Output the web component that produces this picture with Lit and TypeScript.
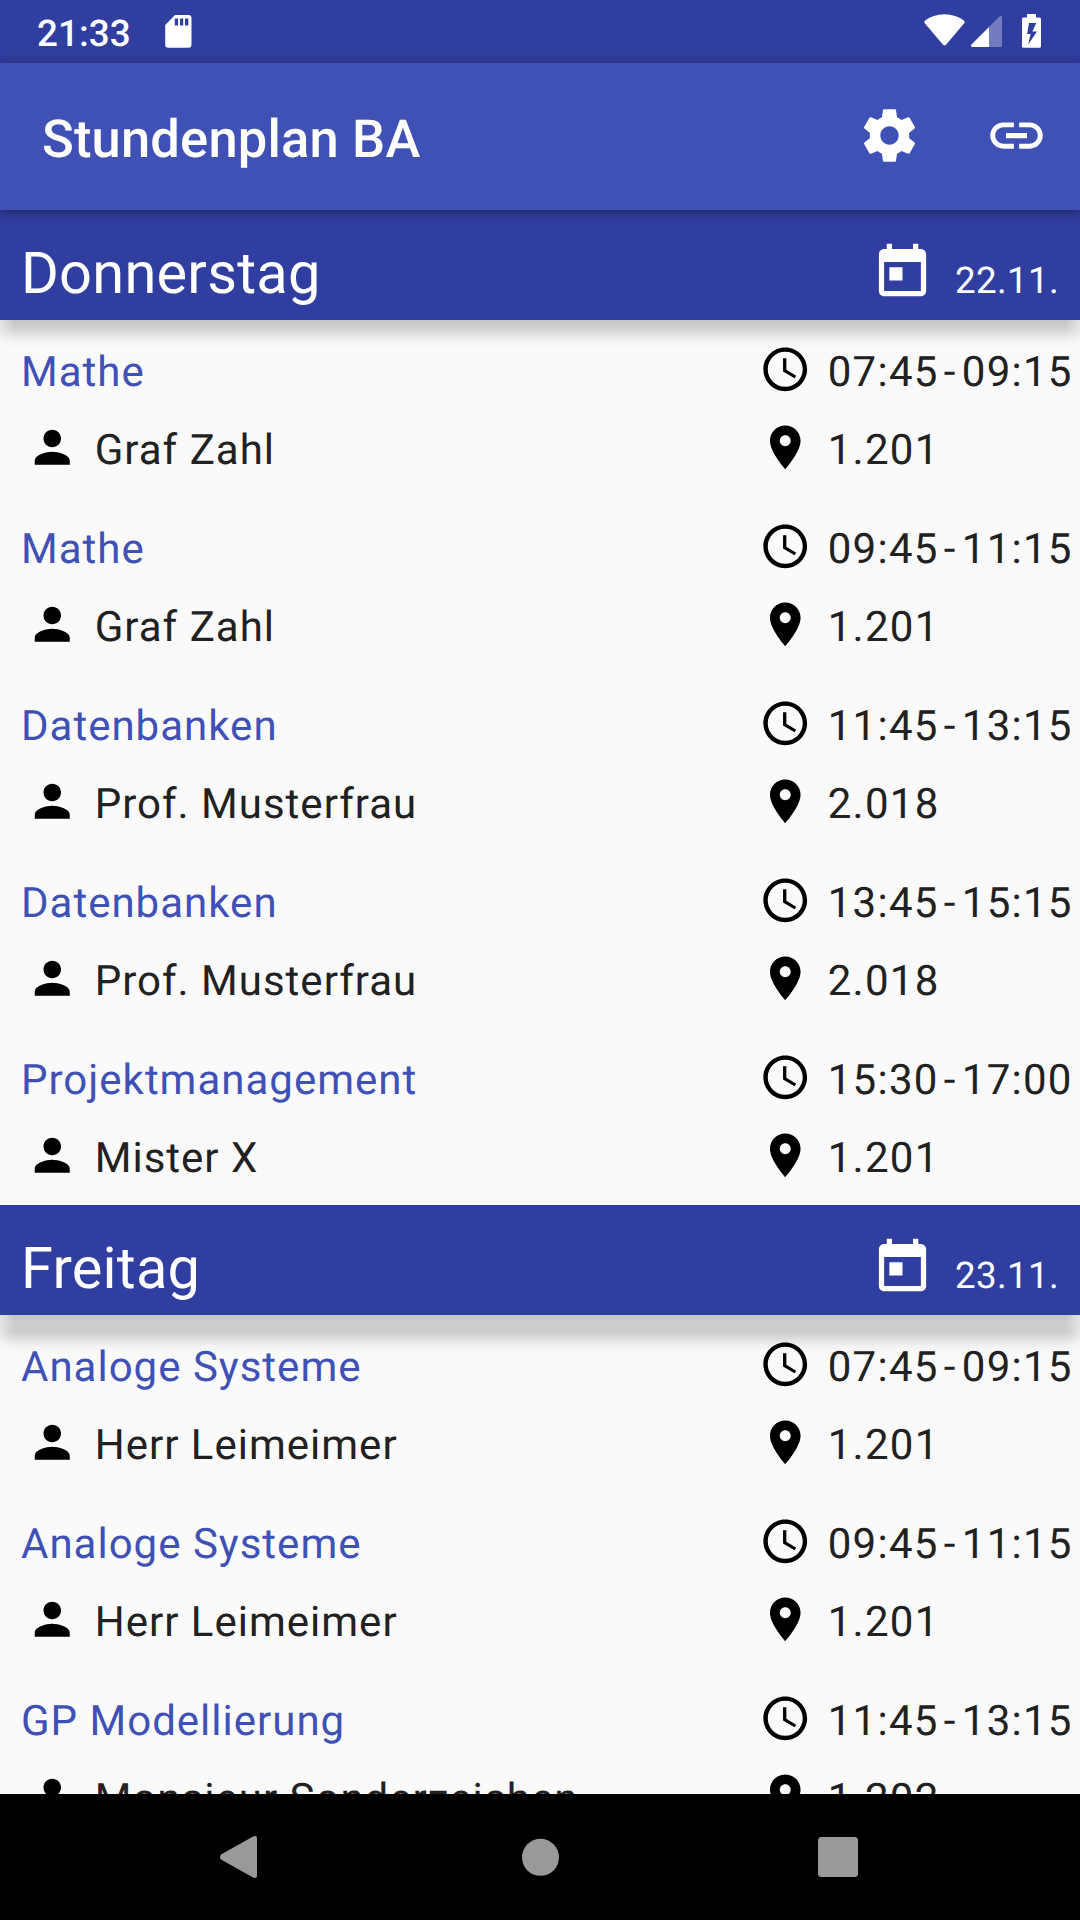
import { LitElement, html, css, svg } from "lit";
import { customElement, property } from "lit/decorators.js";

interface Lesson {
  subject: string;
  teacher: string;
  start: string;
  end: string;
  room: string;
}

interface Day {
  name: string;
  date: string;
  deep: boolean;
  lessons: Lesson[];
}

const lesson = (subject: string, teacher: string, start: string, end: string, room: string): Lesson => ({
  subject,
  teacher,
  start,
  end,
  room,
});

const DAYS: Day[] = [
  {
    name: "Donnerstag",
    date: "22.11.",
    deep: false,
    lessons: [
      lesson("Mathe", "Graf Zahl", "07:45", "09:15", "1.201"),
      lesson("Mathe", "Graf Zahl", "09:45", "11:15", "1.201"),
      lesson("Datenbanken", "Prof. Musterfrau", "11:45", "13:15", "2.018"),
      lesson("Datenbanken", "Prof. Musterfrau", "13:45", "15:15", "2.018"),
      lesson("Projektmanagement", "Mister X", "15:30", "17:00", "1.201"),
    ],
  },
  {
    name: "Freitag",
    date: "23.11.",
    deep: true,
    lessons: [
      lesson("Analoge Systeme", "Herr Leimeimer", "07:45", "09:15", "1.201"),
      lesson("Analoge Systeme", "Herr Leimeimer", "09:45", "11:15", "1.201"),
      lesson("GP Modellierung", "Monsieur Sonderzeichen", "11:45", "13:15", "1.202"),
    ],
  },
];

const ICONS: Record<string, string> = {
  settings:
    "M19.43 12.98c.04-.32.07-.64.07-.98s-.03-.66-.07-.98l2.11-1.65c.19-.15.24-.42.12-.64l-2-3.46c-.12-.22-.39-.3-.61-.22l-2.49 1c-.52-.4-1.08-.73-1.69-.98l-.38-2.65C14.46 2.18 14.25 2 14 2h-4c-.25 0-.46.18-.49.42l-.38 2.65c-.61.25-1.17.59-1.69.98l-2.49-1c-.23-.09-.49 0-.61.22l-2 3.46c-.13.22-.07.49.12.64l2.11 1.65c-.04.32-.07.65-.07.98s.03.66.07.98l-2.11 1.65c-.19.15-.24.42-.12.64l2 3.46c.12.22.39.3.61.22l2.49-1c.52.4 1.08.73 1.69.98l.38 2.65c.03.24.24.42.49.42h4c.25 0 .46-.18.49-.42l.38-2.65c.61-.25 1.17-.59 1.69-.98l2.49 1c.23.09.49 0 .61-.22l2-3.46c.12-.22.07-.49-.12-.64l-2.11-1.65zM12 15.5c-1.93 0-3.5-1.57-3.5-3.5s1.57-3.5 3.5-3.5 3.5 1.57 3.5 3.5-1.57 3.5-3.5 3.5z",
  link: "M3.9 12c0-1.71 1.39-3.1 3.1-3.1h4V7H7c-2.76 0-5 2.24-5 5s2.24 5 5 5h4v-1.9H7c-1.71 0-3.1-1.39-3.1-3.1zM8 13h8v-2H8v2zm9-6h-4v1.9h4c1.71 0 3.1 1.39 3.1 3.1s-1.39 3.1-3.1 3.1h-4V17h4c2.76 0 5-2.24 5-5s-2.24-5-5-5z",
  today:
    "M19 3h-1V1h-2v2H8V1H6v2H5c-1.11 0-1.99.9-1.99 2L3 19c0 1.1.89 2 2 2h14c1.1 0 2-.9 2-2V5c0-1.1-.9-2-2-2zm0 16H5V8h14v11zM7 10h5v5H7z",
  person:
    "M12 12c2.21 0 4-1.79 4-4s-1.79-4-4-4-4 1.79-4 4 1.79 4 4 4zm0 2c-2.67 0-8 1.34-8 4v2h16v-2c0-2.66-5.33-4-8-4z",
  schedule:
    "M11.99 2C6.47 2 2 6.48 2 12s4.47 10 9.99 10C17.52 22 22 17.52 22 12S17.52 2 11.99 2zM12 20c-4.42 0-8-3.58-8-8s3.58-8 8-8 8 3.58 8 8-3.58 8-8 8zm.5-13H11v6l5.25 3.15.75-1.23-4.5-2.67z",
  place:
    "M12 2C8.13 2 5 5.13 5 9c0 5.25 7 13 7 13s7-7.75 7-13c0-3.87-3.13-7-7-7zm0 9.5c-1.38 0-2.5-1.12-2.5-2.5s1.12-2.5 2.5-2.5 2.5 1.12 2.5 2.5-1.12 2.5-2.5 2.5z",
};

const icon = (name: string, cls: string) =>
  html`<svg class=${cls} viewBox="0 0 24 24">${svg`<path fill="currentColor" d=${ICONS[name]}></path>`}</svg>`;

@customElement("status-bar")
class StatusBar extends LitElement {
  static styles = css`
    :host {
      display: flex;
      height: 63px;
      background: #303e9f;
      color: #fff;
    }
    .clock {
      padding-left: 37px;
      width: 164px;
      box-sizing: border-box;
      font-size: 36.75px;
      font-weight: 500;
      line-height: 67px;
      letter-spacing: 0.100px;
    }
    .sd {
      width: 28px;
      height: 34px;
      margin: 14px auto 0 0;
    }
    .system {
      width: 120px;
      height: 36px;
      margin: 13px 37px 0 0;
    }
  `;
  render() {
    return html`
      <span class="clock">21:33</span>
      <svg class="sd" viewBox="0 0 28 34">
        <path
          fill="#fff"
          fill-rule="evenodd"
          d="M11 1h13.5a3 3 0 0 1 3 3v26.700a3 3 0 0 1-3 3h-20.300a3 3 0 0 1-3-3V11zM10.800 4.500v7h3.300v-7zM16 4.500v7h3.200v-7zM21 4.500v7h3.300v-7z"
        ></path>
      </svg>
      <svg class="system" viewBox="0 0 120 36">
        <path fill="#fff" d="M1.800 7.800Q10 1.300 21.500 1.300T41.200 7.800Q42.200 9 41.200 10.300L23 31.800Q21.500 33.300 20 31.800L1.800 10.300Q.8 9 1.800 7.800z"></path>
        <path fill="#fff" fill-opacity=".32" d="M66 14L76.400 3.600Q78.200 2.200 79 4V32.500Q79 34 77.500 34H66z"></path>
        <path fill="#fff" d="M66 14V34H49.200Q47.200 33.500 48.500 31.500z"></path>
        <path
          fill="#fff"
          fill-rule="evenodd"
          d="M104 1h9v3.500h3.500q1.500 0 1.500 1.500v27.200q0 1.500-1.500 1.500h-16q-1.500 0-1.500-1.500V6q0-1.500 1.500-1.500H104zM106 10l-1.800 11h3.300l-2.200 10.500L114 18.500h-4.600L113.300 10z"
        ></path>
      </svg>
    `;
  }
}

@customElement("app-bar")
class AppBar extends LitElement {
  static styles = css`
    :host {
      display: flex;
      align-items: center;
      height: 147px;
      padding: 0 1px 0 42px;
      background: #3f51b5;
      color: #fff;
      box-sizing: border-box;
      position: relative;
      z-index: 2;
      box-shadow: 0 2px 12px rgba(0, 0, 0, 0.4);
    }
    .title {
      flex: 1;
      margin: 4px 0 0;
      font-size: 52.5px;
      font-weight: 500;
      line-height: 62px;
      letter-spacing: 0.170px;
    }
    .action {
      width: 63px;
      height: 63px;
      margin: 0 31.500px 2px;
    }
    .action:first-of-type {
      margin-right: 32.500px;
    }
  `;
  render() {
    return html`
      <h1 class="title">Stundenplan BA</h1>
      ${icon("settings", "action")} ${icon("link", "action")}
    `;
  }
}

@customElement("day-section")
class DaySection extends LitElement {
  @property({ attribute: false }) day!: Day;

  static styles = css`
    :host {
      display: block;
    }
    .head {
      display: flex;
      align-items: baseline;
      height: 110px;
      padding: 0 21px 0 21px;
      box-sizing: border-box;
      background: #303e9f;
      color: #fff;
    }
    .name {
      flex: 1;
      margin: 0;
      font-size: 57.75px;
      font-weight: 400;
      line-height: 128px;
      letter-spacing: 0.220px;
    }
    .today {
      width: 63px;
      height: 63px;
      align-self: flex-start;
      margin: 31px 21px 0 0;
    }
    .date {
      width: 104px;
      font-size: 36.75px;
      letter-spacing: 0.350px;
      white-space: nowrap;
    }
    .shade {
      height: 32px;
      margin: 0 0 -32px;
      background: linear-gradient(#c5c5c5, #cbcbcb 18%, #dedede 42%, #f1f1f1 64%, #f8f8f8 82%, #fafafa);
      mask-image: linear-gradient(
        90deg,
        rgba(0, 0, 0, 0.45),
        #000 14px,
        #000 calc(100% - 14px),
        rgba(0, 0, 0, 0.45)
      );
    }
    .shade.deep {
      height: 42px;
      margin-bottom: -42px;
      background: linear-gradient(#c6c6c6, #cbcbcb 14%, #cdcdcd 42%, #dfdfdf 57%, #f2f2f2 74%, #f8f8f8 87%, #fafafa);
    }
    .lesson {
      display: grid;
      grid-template-columns: 1fr 320.750px;
      grid-auto-rows: 78px;
      align-items: center;
      height: 177px;
      padding: 14px 0 0 21px;
      box-sizing: border-box;
      font-size: 42px;
      line-height: 78px;
      letter-spacing: 1px;
      white-space: nowrap;
      color: #212121;
      position: relative;
    }
    .subject {
      color: #3f51b5;
    }
    .cell {
      display: flex;
      align-items: center;
      letter-spacing: 1.250px;
    }
    .cell.teacher {
      padding-left: 5.250px;
      letter-spacing: 1px;
    }
    .glyph {
      width: 52.500px;
      height: 52.500px;
      margin: 0 16px 7.500px 0;
      color: #000;
    }
    .dash {
      margin: 0 5.200px;
    }
  `;
  render() {
    const { name, date, deep, lessons } = this.day;
    return html`
      <header class="head">
        <h2 class="name">${name}</h2>
        ${icon("today", "today")}
        <span class="date">${date}</span>
      </header>
      <div class="shade ${deep ? "deep" : ""}"></div>
      ${lessons.map(
        (l) => html`
          <article class="lesson">
            <span class="subject">${l.subject}</span>
            <div class="cell">
              ${icon("schedule", "glyph")}<span>${l.start}</span><span class="dash">-</span><span>${l.end}</span>
            </div>
            <div class="cell teacher">${icon("person", "glyph")}<span>${l.teacher}</span></div>
            <div class="cell">${icon("place", "glyph")}<span>${l.room}</span></div>
          </article>
        `
      )}
    `;
  }
}

@customElement("nav-bar")
class NavBar extends LitElement {
  static styles = css`
    :host {
      display: block;
      height: 126px;
      background: #000;
    }
    .keys {
      display: block;
      width: 1080px;
      height: 126px;
    }
  `;
  render() {
    return html`
      <svg class="keys" viewBox="0 0 1080 126" fill="#999">
        <path d="M221 60.500L253.500 42.300Q257 41.200 257 44V82Q257 84.800 253.500 83.800L221 65.500Q219 63 221 60.500z"></path>
        <circle cx="540.500" cy="63.300" r="18.500"></circle>
        <rect x="818" y="43" width="40" height="40" rx="3.500"></rect>
      </svg>
    `;
  }
}

@customElement("app-root")
class AppRoot extends LitElement {
  static styles = css`
    :host {
      display: flex;
      flex-direction: column;
      width: 1080px;
      height: 1920px;
      overflow: hidden;
      background: #fafafa;
      font-family: Roboto, "Noto Sans", sans-serif;
      text-rendering: geometricPrecision;
    }
    .list {
      flex: 1;
      min-height: 0;
      overflow: hidden;
    }
  `;
  render() {
    return html`
      <status-bar></status-bar>
      <app-bar></app-bar>
      <main class="list">${DAYS.map((d) => html`<day-section .day=${d}></day-section>`)}</main>
      <nav-bar></nav-bar>
    `;
  }
}
